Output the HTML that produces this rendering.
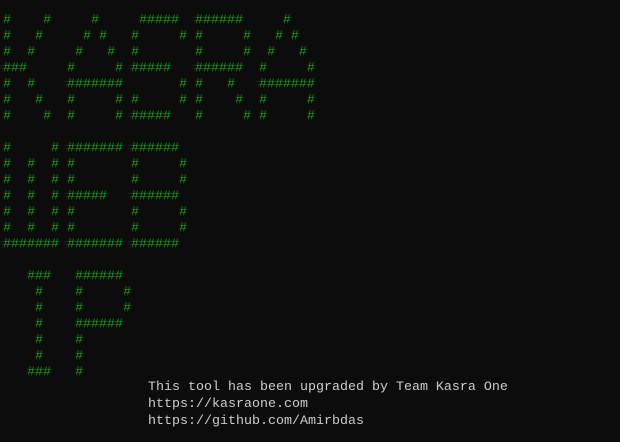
<!DOCTYPE html>
<html><head><style>
html,body{margin:0;padding:0;background:#0c0c0c;width:620px;height:442px;overflow:hidden}
pre{margin:0;position:absolute;font-family:"Liberation Mono",monospace;font-size:13.33px;}
#art{left:3px;top:13px;line-height:16px;color:#13a10e;}
#txt{left:148px;top:379px;line-height:17px;color:#cccccc;}
</style></head><body>
<pre id="art">#    #     #     #####  ######     #
#   #     # #   #     # #     #   # #
#  #     #   #  #       #     #  #   #
###     #     # #####   ######  #     #
#  #    #######       # #   #   #######
#   #   #     # #     # #    #  #     #
#    #  #     # #####   #     # #     #

#     # ####### ######
#  #  # #       #     #
#  #  # #       #     #
#  #  # #####   ######
#  #  # #       #     #
#  #  # #       #     #
####### ####### ######

   ###   ######
    #    #     #
    #    #     #
    #    ######
    #    #
    #    #
   ###   #</pre>
<pre id="txt">This tool has been upgraded by Team Kasra One
https://kasraone.com
https://github.com/Amirbdas</pre>
</body></html>
